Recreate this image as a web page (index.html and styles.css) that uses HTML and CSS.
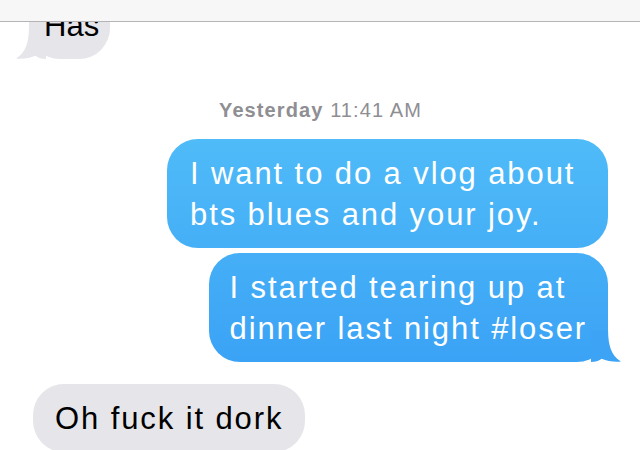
FILE: index.html
```html
<!DOCTYPE html>
<html lang="en">
<head>
<meta charset="utf-8">
<title>Messages</title>
<link rel="stylesheet" href="styles.css">
</head>
<body>
<div class="screen">
  <div class="navbar"></div>
  <div class="thread">
    <div class="row in first">
      <div class="bubble gray has">Has<svg class="tail tail-left" viewBox="0 0 30 30" width="32" height="32"><path d="M0 0 H16 C16 14 19 24 28 29.6 C22 30.4 15 29 10 27 C7 29 4 30 0 30 Z"/></svg></div>
    </div>
    <div class="stamp"><b>Yesterday</b> 11:41 AM</div>
    <div class="row out">
      <div class="bubble blue wide">I want to do a vlog about<br>bts blues and your joy.</div>
    </div>
    <div class="row out tight">
      <div class="bubble blue second">I started tearing up at<br>dinner last night #loser<svg class="tail tail-right" viewBox="0 0 30 30" width="32" height="32"><path d="M0 0 H16 C16 14 19 24 28 29.6 C22 30.4 15 29 10 27 C7 29 4 30 0 30 Z"/></svg></div>
    </div>
    <div class="row in last">
      <div class="bubble gray">Oh fuck it dork</div>
    </div>
  </div>
</div>
</body>
</html>
```

FILE: styles.css
```css
* { box-sizing: border-box; }
html, body { margin: 0; padding: 0; background: #ffffff; }
.screen {
  position: relative;
  width: 640px;
  height: 450px;
  overflow: hidden;
  background: #ffffff;
  font-family: "Liberation Sans", Arial, sans-serif;
}
.navbar {
  position: absolute;
  top: 0; left: 0; right: 0;
  height: 22px;
  background: #f7f7f8;
  border-bottom: 1px solid #b4b4b6;
  z-index: 5;
}
.thread {
  display: flex;
  flex-direction: column;
  padding: 0 32px 0 33px;
}
.row { display: flex; }
.row.in { justify-content: flex-start; }
.row.out { justify-content: flex-end; margin-top: 18px; }
.row.out.tight { margin-top: 5px; }
.row.first { margin-top: -9px; }
.row.last { margin-top: 22px; }
.bubble {
  position: relative;
  font-size: 31px;
  line-height: 41px;
  letter-spacing: 1.9px;
  padding: 14px 22px 13px 22px;
  border-radius: 31px;
  white-space: nowrap;
}
.bubble.gray { background: #e5e5ea; color: #000000; }
.bubble.blue {
  color: #ffffff;
  background: linear-gradient(to bottom, #5ccafa 0px, #3399f4 450px);
  background-attachment: fixed;
}
.bubble.wide { width: 441px; padding-left: 23px; }
.bubble.second { padding-left: 20px; padding-right: 21px; }
.bubble.has { margin-left: -4px; padding-left: 15px; padding-right: 11px; letter-spacing: 0; }
.tail {
  position: absolute;
  bottom: 0;
  display: block;
}
.tail-right { right: -15px; fill: #3ca3f5; }
.tail-left { left: -15px; fill: #e5e5ea; transform: scaleX(-1); }
.stamp {
  margin-top: 40px;
  text-align: center;
  font-size: 20px;
  line-height: 22px;
  letter-spacing: 1.1px;
  color: #8e8e93;
}
.stamp b { font-weight: 700; }
```
